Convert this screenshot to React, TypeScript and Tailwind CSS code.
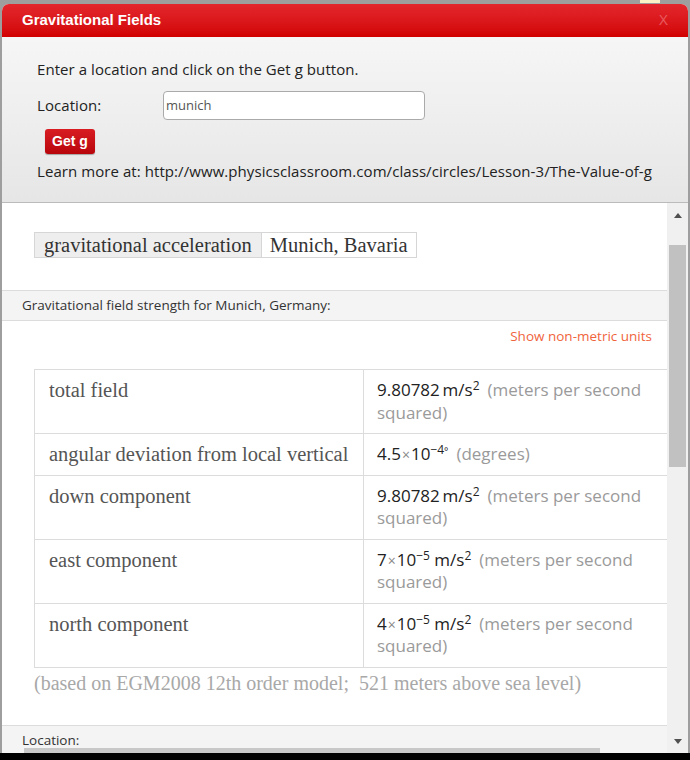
import React from 'react';

const sup = 'text-[12px] leading-none';
const times = 'text-[#888] text-[14px] leading-none mx-[1px]';

const rows = [
  { label: 'total field', value: <>9.80782&thinsp;m/s<sup className={sup}>2</sup></>, unit: '(meters per second squared)' },
  { label: 'angular deviation from local vertical', value: <>4.5<span className={times}>×</span>10<sup className={sup}>−4</sup><sup className="text-[10px] leading-none">°</sup></>, unit: '(degrees)' },
  { label: 'down component', value: <>9.80782&thinsp;m/s<sup className={sup}>2</sup></>, unit: '(meters per second squared)' },
  { label: 'east component', value: <>7<span className={times}>×</span>10<sup className={sup}>−5</sup> m/s<sup className={sup}>2</sup></>, unit: '(meters per second squared)' },
  { label: 'north component', value: <>4<span className={times}>×</span>10<sup className={sup}>−5</sup> m/s<sup className={sup}>2</sup></>, unit: '(meters per second squared)' },
];

export default function App() {
  return (
    <div className="w-[690px] h-[760px] bg-[#9e9e9e] flex flex-col overflow-hidden font-['Open_Sans',sans-serif]">
      {/* top strip of the page behind the dialog */}
      <div className="h-[4px] shrink-0 flex">
        <div className="flex-1" />
        <div className="w-[20px] h-[3px] bg-[#fbf3c8] mr-[30px]" />
      </div>
      <div className="flex-1 mx-[2px] flex flex-col min-h-0 rounded-t-[7px] overflow-hidden bg-white">
        {/* Header */}
        <div className="h-[33px] shrink-0 bg-gradient-to-b from-[#e3262c] to-[#d20000] flex items-center justify-between px-[20px]">
          <span className="text-white font-bold text-[15px] font-['Liberation_Sans',sans-serif]">Gravitational Fields</span>
          <span className="text-[#e8585c] text-[14px] font-['Liberation_Sans',sans-serif]">X</span>
        </div>

        {/* Form panel */}
        <div className="h-[166px] shrink-0 bg-gradient-to-b from-[#f6f6f6] to-[#e6e6e6] border-b border-[#bbb] pl-[35px] pt-[22px] text-[15px] tracking-[0.07px] text-[#222]">
          <p className="leading-[20px]">Enter a location and click on the Get g button.</p>
          <div className="flex items-center mt-[12px]">
            <span className="w-[126px]">Location:</span>
            <div className="w-[262px] h-[29px] bg-white border border-[#aaa] rounded-[4px] flex items-center px-[2px] text-[13px] tracking-normal text-[#555]">munich</div>
          </div>
          <button className="mt-[9px] ml-[8px] h-[25px] px-[7px] rounded-[3px] bg-gradient-to-b from-[#d81c22] to-[#b8050b] text-white font-bold text-[14px] tracking-normal font-['Liberation_Sans',sans-serif] shadow-[0_1px_1px_rgba(0,0,0,0.3)]">Get g</button>
          <p className="mt-[7px] leading-[20px]">Learn more at: http://www.physicsclassroom.com/class/circles/Lesson-3/The-Value-of-g</p>
        </div>

        {/* Scroll area */}
        <div className="flex-1 flex min-h-0">
          <div className="flex-1 min-w-0 overflow-hidden flex flex-col">
            <div className="pt-[29px] pl-[32px] h-[87px]">
              <div className="inline-flex border border-[#d6d6d6] font-['Liberation_Serif',serif] text-[20.5px] text-[#333] leading-[24px]">
                <span className="bg-[#eeeeee] px-[9px] border-r border-[#d6d6d6]">gravitational acceleration</span>
                <span className="px-[8px]">Munich, Bavaria</span>
              </div>
            </div>
            <div className="h-[31px] bg-[#f4f4f4] border-y border-[#dcdcdc] flex items-center pl-[20px] text-[13.5px] text-[#333]">
              Gravitational field strength for Munich, Germany:
            </div>
            <div className="text-right pr-[15px] pt-[5px] text-[13.5px] text-[#f0643c] leading-[20px]">Show non-metric units</div>
            <div className="pl-[32px] pt-[23px]">
              <div className="w-[680px] border-t border-l border-[#dcdcdc]">
                {rows.map((r) => (
                  <div key={r.label} className="flex border-b border-[#dcdcdc]">
                    <div className="w-[329px] shrink-0 border-r border-[#dcdcdc] px-[14px] py-[9px] leading-[22px] font-['Liberation_Serif',serif] text-[20.5px] text-[#555]">{r.label}</div>
                    <div className="w-[300px] shrink-0 pl-[13px] pr-[10px] py-[9px] leading-[22.5px] text-[17px]">
                      <span className="text-[#222]">{r.value}</span>
                      <span className="text-[#9a9a9a] ml-[8px]">{r.unit}</span>
                    </div>
                  </div>
                ))}
              </div>
              <p className="mt-[3px] font-['Liberation_Serif',serif] text-[20px] text-[#a8a8a8] leading-[24px]">(based on EGM2008 12th order model;&nbsp; 521 meters above sea level)</p>
            </div>
            <div className="mt-auto h-[28px] bg-[#f4f4f4] border-t border-[#dcdcdc] pl-[20px] pt-[6px] text-[13.5px] text-[#333] leading-[16px] relative">
              Location:
              <div className="absolute left-[22px] bottom-0 w-[576px] h-[5px] bg-[#c8c8c8]" />
            </div>
          </div>
          {/* Scrollbar */}
          <div className="w-[21px] shrink-0 bg-[#f0f0f0] flex flex-col items-center">
            <div className="h-[24px] flex items-center justify-center">
              <div className="w-0 h-0 border-x-[4px] border-x-transparent border-b-[5px] border-b-[#505050]" />
            </div>
            <div className="mt-[18px] w-[17px] h-[222px] bg-[#c1c1c1]" />
            <div className="mt-auto h-[24px] flex items-center justify-center">
              <div className="w-0 h-0 border-x-[4px] border-x-transparent border-t-[5px] border-t-[#505050]" />
            </div>
          </div>
        </div>
      </div>
      <div className="h-[7px] shrink-0 bg-black" />
    </div>
  );
}
